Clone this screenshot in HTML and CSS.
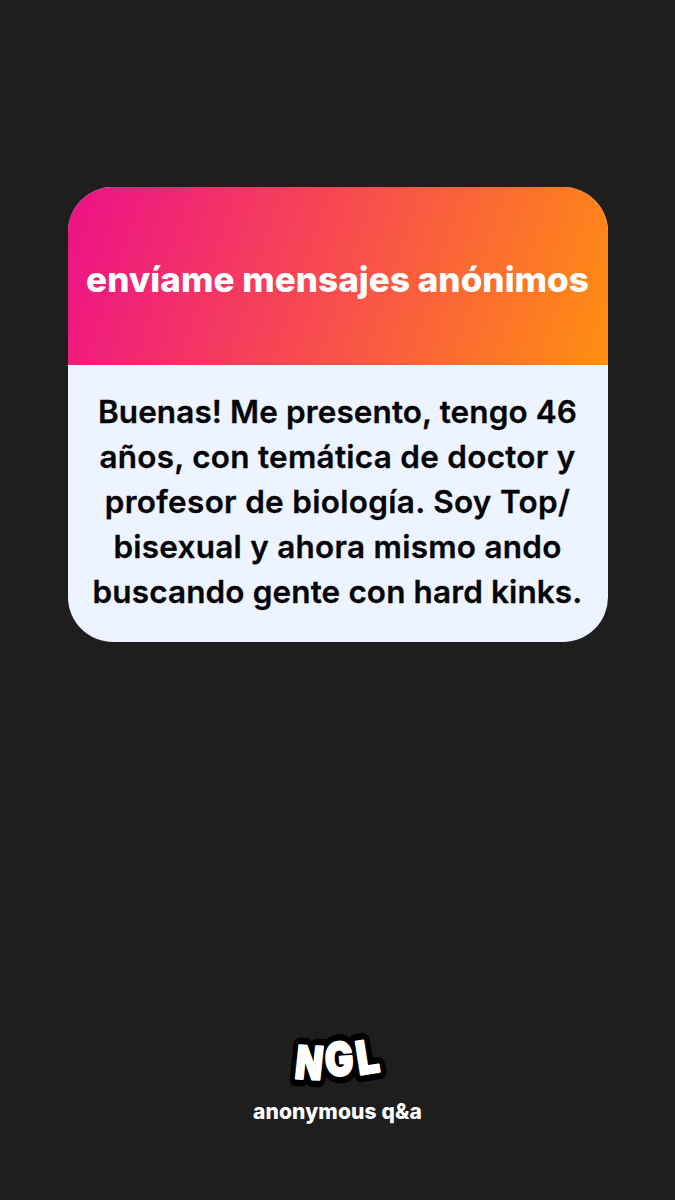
FILE: index.html
```html
<!DOCTYPE html>
<html lang="es">
<head>
<meta charset="utf-8">
<title>NGL</title>
<link rel="stylesheet" href="styles.css">
</head>
<body>
<main class="story">
  <section class="card">
    <header class="card-header"><h1 class="prompt">envíame mensajes anónimos</h1></header>
    <p class="message">
      <span class="line line-1">Buenas! Me presento, tengo 46</span>
      <span class="line line-2">años, con temática de doctor y</span>
      <span class="line line-3">profesor de biología. Soy Top/</span>
      <span class="line line-4">bisexual y ahora mismo ando</span>
      <span class="line line-5">buscando gente con hard kinks.</span>
    </p>
  </section>
  <footer class="brand">
    <svg class="logo" width="110" height="65" viewBox="0 0 110 65" role="img" aria-label="NGL">
      <g class="logo-outline">
        <text transform="translate(11 53.500) rotate(3) skewX(-3) scale(.77 1)">N</text>
        <text transform="translate(43 51.500) rotate(-4) scale(.82 1)">G</text>
        <text transform="translate(76 50) rotate(-9) scale(.85 1)">L</text>
      </g>
      <g class="logo-fill">
        <text transform="translate(11 53.500) rotate(3) skewX(-3) scale(.77 1)">N</text>
        <text transform="translate(43 51.500) rotate(-4) scale(.82 1)">G</text>
        <text transform="translate(76 50) rotate(-9) scale(.85 1)">L</text>
      </g>
    </svg>
    <p class="tagline">anonymous q&amp;a</p>
  </footer>
</main>
</body>
</html>
```

FILE: styles.css
```css
* { box-sizing: border-box; }
body { margin: 0; background: #1e1e1e; font-family: Inter, "Liberation Sans", sans-serif; }
h1, p { margin: 0; }
.story { height: 1200px; padding: 187px 67.500px 0; display: flex; flex-direction: column; justify-content: space-between; overflow: hidden; }
.card { height: 454.500px; border-radius: 45px; overflow: hidden; background: #edf4ff; }
.card-header { height: 178px; display: flex; align-items: center; justify-content: center; padding-top: 6px; background: linear-gradient(108deg, #ec1187 0%, #f8504b 52%, #ff8f10 100%); }
.prompt { color: #fff; font-size: 35px; font-weight: 800; line-height: 44px; letter-spacing: .05px; white-space: nowrap; }
.message { padding-top: 25.400px; color: #050507; font-size: 31.500px; font-weight: 600; line-height: 44.800px; text-align: center; -webkit-text-stroke: .3px #050507; }
.line { display: block; white-space: nowrap; }
.line-1 { letter-spacing: .1px; }
.line-2 { letter-spacing: .26px; }
.line-3 { letter-spacing: .3px; }
.line-4 { letter-spacing: .25px; }
.line-5 { letter-spacing: .12px; }
.brand { display: flex; flex-direction: column; align-items: center; padding-bottom: 76px; }
.logo { display: block; overflow: visible; }
.logo text { font-family: Inter, sans-serif; font-size: 46px; font-weight: 900; }
.logo-outline { fill: #000; stroke: #000; stroke-width: 15px; stroke-linejoin: round; }
.logo-fill { fill: #fff; stroke: #fff; stroke-width: 2px; stroke-linejoin: round; }
.tagline { height: 34px; padding-top: 8px; color: #fff; font-size: 21px; font-weight: 800; line-height: 28px; letter-spacing: .15px; }
```
